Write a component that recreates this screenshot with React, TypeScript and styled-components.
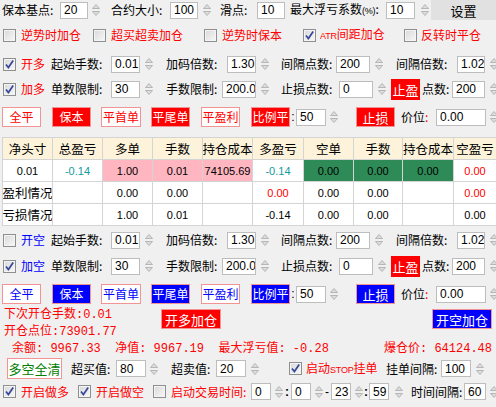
import React from 'react';
import styled, { createGlobalStyle } from 'styled-components';

const RED = '#ff0000';
const BLUE = '#0000ff';
const GREEN = '#008000';
const CJK = '"Noto Sans CJK SC", "Noto Sans", sans-serif';
const NUM = '"Liberation Sans", Arial, sans-serif';
const MONO = '"Liberation Mono", "Noto Sans CJK SC", monospace';

const GlobalStyle = createGlobalStyle`
  html, body {
    margin: 0;
    padding: 0;
    background: #f0f0f0;
  }
`;

const Panel = styled.div`
  width: 496px;
  height: 407px;
  overflow: hidden;
  background: #f0f0f0;
  font-family: ${CJK};
  font-size: 12px;
  color: #000;
  display: flex;
  flex-direction: column;
`;

const Row = styled.div<{ $mt: number; $h: number; $pl?: number }>`
  display: flex;
  align-items: center;
  flex-shrink: 0;
  margin-top: ${(p) => p.$mt}px;
  height: ${(p) => p.$h}px;
  padding-left: ${(p) => p.$pl ?? 0}px;
`;

const Label = styled.span<{ $w?: number; $ml?: number; $color?: string }>`
  flex-shrink: 0;
  white-space: nowrap;
  overflow: hidden;
  line-height: 16px;
  width: ${(p) => (p.$w ? `${p.$w}px` : 'auto')};
  margin-left: ${(p) => p.$ml ?? 0}px;
  color: ${(p) => p.$color ?? '#000'};
`;

const Small = styled.span`
  font-family: ${NUM};
  font-size: 9px;
  letter-spacing: -0.2px;
`;

const Sep = styled.span<{ $w: number; $bold?: boolean; $color?: string }>`
  flex-shrink: 0;
  width: ${(p) => p.$w}px;
  text-align: center;
  font-family: ${NUM};
  font-size: 12px;
  font-weight: ${(p) => (p.$bold ? 700 : 400)};
  color: ${(p) => p.$color ?? '#000'};
`;

const Field = styled.input<{ $w: number; $ml?: number }>`
  box-sizing: border-box;
  flex-shrink: 0;
  width: ${(p) => p.$w}px;
  height: 17px;
  margin: 0 0 0 ${(p) => p.$ml ?? 0}px;
  padding: 0 0 0 3px;
  border: 1px solid #bdbdbd;
  background: #fff;
  font-family: ${NUM};
  font-size: 12px;
  color: #000;
  outline: none;
`;

const SpinBox = styled.span<{ $ml: number }>`
  display: inline-flex;
  flex-shrink: 0;
  width: 8px;
  height: 16px;
  margin-left: ${(p) => p.$ml}px;
`;

function Spin({ ml = 5 }: { ml?: number }) {
  return (
    <SpinBox $ml={ml}>
      <svg width="8" height="16" viewBox="0 0 8 16">
        <path d="M4 2.5 L7.5 6.5 H0.5 Z" fill="#dcdcdc" stroke="#a9a9a9" strokeWidth="0.8" />
        <path d="M0.5 9.5 H7.5 L4 13.5 Z" fill="#dcdcdc" stroke="#a9a9a9" strokeWidth="0.8" />
      </svg>
    </SpinBox>
  );
}

const Box = styled.span<{ $ml: number }>`
  box-sizing: border-box;
  display: inline-flex;
  align-items: center;
  justify-content: center;
  flex-shrink: 0;
  width: 13px;
  height: 13px;
  margin-left: ${(p) => p.$ml}px;
  border: 1px solid #8e8f8f;
  background: linear-gradient(135deg, #d8d8d8, #f8f8f8);
  box-shadow: inset 0 0 0 1px #f4f4f4;
`;

function Check({ on = false, ml = 0 }: { on?: boolean; ml?: number }) {
  return (
    <Box $ml={ml}>
      {on && (
        <svg width="11" height="11" viewBox="0 0 11 11">
          <path d="M2 5.5 L4.4 8.6 L9.2 1.6" fill="none" stroke="#36479a" strokeWidth="1.7" />
        </svg>
      )}
    </Box>
  );
}

const Btn = styled.button<{ $w: number; $h?: number; $ml?: number; $mt?: number; $tone: string; $filled?: boolean; $size?: number }>`
  box-sizing: border-box;
  flex-shrink: 0;
  width: ${(p) => p.$w}px;
  height: ${(p) => p.$h ?? 20}px;
  margin: ${(p) => p.$mt ?? 0}px 0 0 ${(p) => p.$ml ?? 0}px;
  padding: 0;
  border: 1px solid #f29494;
  background: ${(p) => (p.$filled ? p.$tone : '#fff')};
  color: ${(p) => (p.$filled ? '#fff' : p.$tone)};
  font-family: ${CJK};
  font-size: ${(p) => p.$size ?? 12}px;
  line-height: 1;
  white-space: nowrap;
  overflow: hidden;
`;

const SetButton = styled.button`
  box-sizing: border-box;
  flex-shrink: 0;
  width: 65px;
  height: 20px;
  margin: 0 0 0 2px;
  align-self: flex-start;
  border: none;
  background: #e1e1e1;
  font-family: ${CJK};
  font-size: 13px;
  color: #000;
`;

const Tag = styled.span<{ $ml: number }>`
  display: inline-flex;
  align-items: center;
  justify-content: center;
  flex-shrink: 0;
  width: 29px;
  height: 21px;
  margin-left: ${(p) => p.$ml}px;
  background: ${RED};
  color: #fff;
  font-size: 13px;
`;

const Table = styled.div`
  display: grid;
  grid-template-columns: 49px 49px 49px 49px 49px 50px 49px 48px 50px 42px;
  grid-auto-rows: 21px;
  gap: 1px;
  width: max-content;
  flex-shrink: 0;
  align-self: flex-start;
  margin: 10px 0 0 2px;
  border: 1px solid #d4d4d4;
  border-right: none;
  background: #d4d4d4;
`;

const Cell = styled.div<{ $bg?: string; $color?: string; $text?: boolean }>`
  display: flex;
  align-items: center;
  justify-content: center;
  overflow: hidden;
  white-space: nowrap;
  background: ${(p) => p.$bg ?? '#fff'};
  color: ${(p) => p.$color ?? '#000'};
  font-family: ${(p) => (p.$text ? CJK : NUM)};
  font-size: ${(p) => (p.$text ? 12.5 : 11)}px;
`;

const InfoTop = styled.div`
  display: flex;
  align-items: flex-start;
  flex-shrink: 0;
  margin-top: 3px;
`;

const InfoLines = styled.div`
  display: flex;
  flex-direction: column;
  width: 153px;
  padding-left: 4px;
`;

const MonoLine = styled.div<{ $pl?: number }>`
  display: flex;
  height: 17px;
  line-height: 17px;
  flex-shrink: 0;
  padding-left: ${(p) => p.$pl ?? 0}px;
  font-family: ${MONO};
  font-size: 12px;
  color: ${RED};
  white-space: pre;
`;

const MonoPart = styled.span<{ $w?: number }>`
  width: ${(p) => (p.$w ? `${p.$w}px` : 'auto')};
  flex-shrink: 0;
`;

const PINK = '#ffb6c1';
const SEA = '#2e8b57';
const TEAL = '#129c9c';

const head = ['净头寸', '总盈亏', '多单', '手数', '持仓成本', '多盈亏', '空单', '手数', '持仓成本', '空盈亏'];

type C = { t: string; bg?: string; c?: string; text?: boolean };
const rows: C[][] = [
  [
    { t: '0.01' },
    { t: '-0.14', c: TEAL },
    { t: '1.00', bg: PINK },
    { t: '0.01', bg: PINK },
    { t: '74105.69', bg: PINK },
    { t: '-0.14', c: TEAL },
    { t: '0.00', bg: SEA },
    { t: '0.00', bg: SEA },
    { t: '0.00', bg: SEA },
    { t: '0.00', c: RED },
  ],
  [
    { t: '盈利情况', text: true },
    { t: '' },
    { t: '0.00' },
    { t: '0.00' },
    { t: '' },
    { t: '0.00', c: RED },
    { t: '0.00' },
    { t: '0.00' },
    { t: '' },
    { t: '0.00', c: RED },
  ],
  [
    { t: '亏损情况', text: true },
    { t: '' },
    { t: '1.00' },
    { t: '0.01' },
    { t: '' },
    { t: '-0.14' },
    { t: '0.00' },
    { t: '0.00' },
    { t: '' },
    { t: '0.00' },
  ],
];

function OpenRow({ mt, on, title, color }: { mt: number; on: boolean; title: string; color: string }) {
  return (
    <Row $mt={mt} $h={18} $pl={3}>
      <Check on={on} />
      <Label $ml={5} $w={30} $color={color}>{title}</Label>
      <Label $w={60}>起始手数:</Label>
      <Field $w={29} defaultValue="0.01" readOnly />
      <Spin />
      <Label $ml={13} $w={61}>加码倍数:</Label>
      <Field $w={29} defaultValue="1.30" readOnly />
      <Spin />
      <Label $ml={12} $w={55}>间隔点数:</Label>
      <Field $w={34} defaultValue="200" readOnly />
      <Spin />
      <Label $ml={13} $w={61}>间隔倍数:</Label>
      <Field $w={28} defaultValue="1.02" readOnly />
      <Spin />
    </Row>
  );
}

function AddRow({ mt, title, color }: { mt: number; title: string; color: string }) {
  return (
    <Row $mt={mt} $h={18} $pl={3}>
      <Check on />
      <Label $ml={5} $w={30} $color={color}>{title}</Label>
      <Label $w={60}>单数限制:</Label>
      <Field $w={29} defaultValue="30" readOnly />
      <Spin />
      <Label $ml={13} $w={56}>手数限制:</Label>
      <Field $w={34} defaultValue="200.00" readOnly />
      <Spin />
      <Label $ml={12} $w={58}>止损点数:</Label>
      <Field $w={34} defaultValue="0" readOnly />
      <Spin />
      <Tag $ml={5}>止盈</Tag>
      <Label $ml={2} $w={30}>点数:</Label>
      <Field $w={33} defaultValue="200" readOnly />
      <Spin />
    </Row>
  );
}

function ActionRow({ mt, tone }: { mt: number; tone: string }) {
  return (
    <Row $mt={mt} $h={20} $pl={2}>
      <Btn $w={39} $tone={tone}>全平</Btn>
      <Btn $w={39} $ml={11} $tone={tone} $filled>保本</Btn>
      <Btn $w={40} $ml={10} $tone={tone}>平首单</Btn>
      <Btn $w={39} $ml={10} $tone={tone} $filled>平尾单</Btn>
      <Btn $w={39} $ml={11} $tone={tone}>平盈利</Btn>
      <Btn $w={39} $ml={11} $tone={tone} $filled>比例平</Btn>
      <Sep $w={6}>:</Sep>
      <Field $w={30} defaultValue="50" readOnly />
      <Spin ml={4} />
      <Btn $w={39} $ml={18} $tone={tone} $filled $size={13}>止损</Btn>
      <Label $ml={6} $w={35}>
        价位<span style={{ color: RED }}>:</span>
      </Label>
      <Field $w={50} defaultValue="0.00" readOnly />
      <Spin ml={4} />
    </Row>
  );
}

export default function App() {
  return (
    <>
      <GlobalStyle />
      <Panel>
        <Row $mt={0} $h={20} $pl={2}>
          <Label $w={58}>保本基点:</Label>
          <Field $w={28} defaultValue="20" readOnly />
          <Spin ml={4} />
          <Label $ml={11} $w={59}>合约大小:</Label>
          <Field $w={28} defaultValue="100" readOnly />
          <Spin />
          <Label $ml={9} $w={37}>滑点:</Label>
          <Field $w={28} defaultValue="10" readOnly />
          <Label $ml={5} $w={96}>
            最大浮亏系数<Small>(%)</Small>:
          </Label>
          <Field $w={29} defaultValue="10" readOnly />
          <Spin ml={6} />
          <SetButton>设置</SetButton>
        </Row>

        <Row $mt={6} $h={18} $pl={3}>
          <Check />
          <Label $ml={5} $w={72} $color={RED}>逆势时加仓</Label>
          <Check />
          <Label $ml={5} $w={93} $color={RED}>超买超卖加仓</Label>
          <Check />
          <Label $ml={5} $w={81} $color={RED}>逆势时保本</Label>
          <Check on />
          <Label $ml={4} $w={84} $color={RED}>
            <Small>ATR</Small>间距加仓
          </Label>
          <Check />
          <Label $ml={4} $color={RED}>反转时平仓</Label>
        </Row>

        <OpenRow mt={11} on title="开多" color={RED} />
        <AddRow mt={7} title="加多" color={RED} />
        <ActionRow mt={9} tone={RED} />

        <Table>
          {head.map((h, i) => (
            <Cell key={`h${i}`} $bg="#fdf2da" $text>{h}</Cell>
          ))}
          {rows.map((r, ri) =>
            r.map((c, ci) => (
              <Cell key={`${ri}-${ci}`} $bg={c.bg} $color={c.c} $text={c.text}>
                {c.t}
              </Cell>
            ))
          )}
        </Table>

        <OpenRow mt={5} on={false} title="开空" color={BLUE} />
        <AddRow mt={8} title="加空" color={BLUE} />
        <ActionRow mt={9} tone={BLUE} />

        <InfoTop>
          <InfoLines>
            <MonoLine>下次开仓手数:0.01</MonoLine>
            <MonoLine>开仓点位:73901.77</MonoLine>
          </InfoLines>
          <Btn $w={60} $ml={4} $mt={2} $tone={RED} $filled $size={13}>开多加仓</Btn>
          <Btn $w={60} $ml={211} $mt={2} $tone={BLUE} $filled $size={13}>开空加仓</Btn>
        </InfoTop>
        <MonoLine $pl={12}>
          <MonoPart $w={372}>余额: 9967.33  净值: 9967.19  最大浮亏值: -0.28</MonoPart>
          <MonoPart>爆仓价: 64124.48</MonoPart>
        </MonoLine>

        <Row $mt={0} $h={21} $pl={7}>
          <Btn $w={55} $h={21} $tone={GREEN} $size={13}>多空全清</Btn>
          <Label $ml={9} $w={45}>超买值:</Label>
          <Field $w={30} defaultValue="80" readOnly />
          <Spin ml={4} />
          <Label $ml={13} $w={45}>超卖值:</Label>
          <Field $w={30} defaultValue="20" readOnly />
          <Spin />
          <Check on ml={30} />
          <Label $ml={4} $w={80} $color={RED}>
            启动<Small>STOP</Small>挂单
          </Label>
          <Label $w={55}>挂单间隔:</Label>
          <Field $w={30} defaultValue="100" readOnly />
          <Spin />
        </Row>

        <Row $mt={4} $h={17} $pl={3}>
          <Check on />
          <Label $ml={5} $w={57} $color={RED}>开启做多</Label>
          <Check on />
          <Label $ml={5} $w={57} $color={RED}>开启做空</Label>
          <Check />
          <Label $ml={5} $w={80} $color={RED}>启动交易时间:</Label>
          <Field $w={20} defaultValue="0" readOnly />
          <Spin ml={4} />
          <Sep $w={8} $bold>:</Sep>
          <Field $w={20} defaultValue="0" readOnly />
          <Spin ml={4} />
          <Sep $w={8}>-</Sep>
          <Field $w={20} defaultValue="23" readOnly />
          <Spin ml={4} />
          <Sep $w={6} $bold>:</Sep>
          <Field $w={20} defaultValue="59" readOnly />
          <Spin ml={6} />
          <Label $ml={8} $w={53}>时间间隔:</Label>
          <Field $w={22} defaultValue="60" readOnly />
          <Spin ml={4} />
        </Row>
      </Panel>
    </>
  );
}
